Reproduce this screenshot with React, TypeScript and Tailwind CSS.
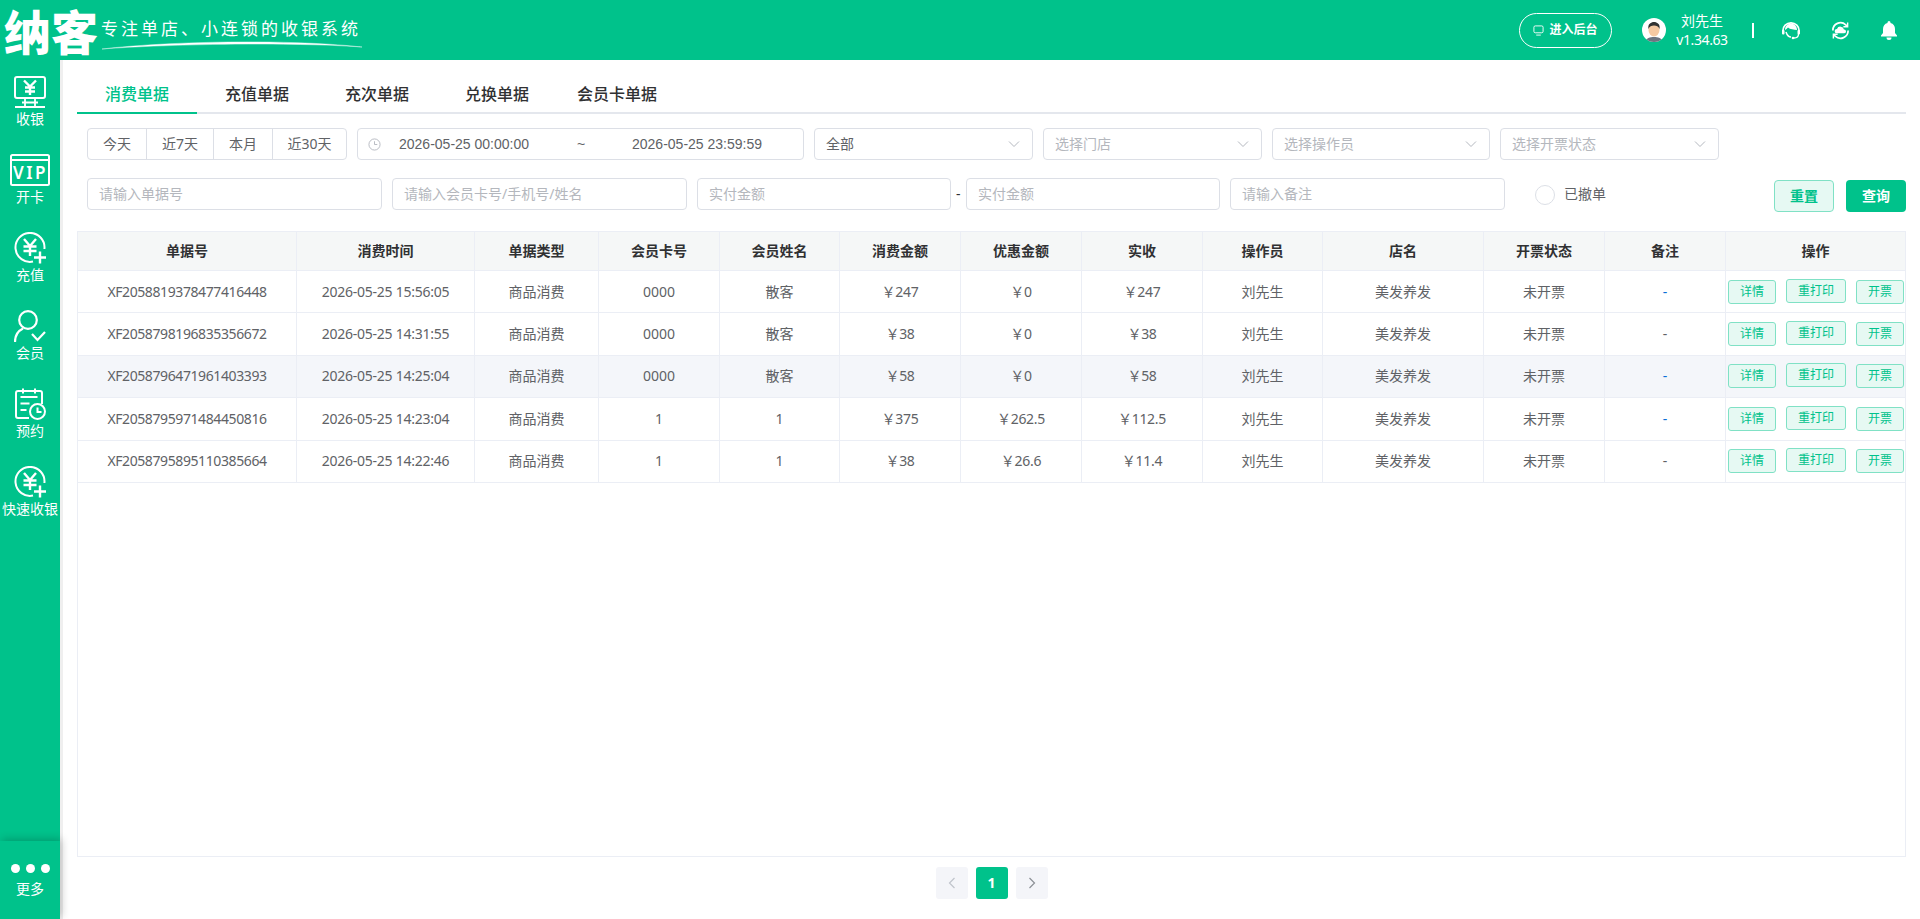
import React from "react";

const FONT = "font-['Noto_Sans','Noto_Sans_CJK_SC',sans-serif]";

function MonitorIcon() {
  return (
    <svg width="32" height="32" viewBox="0 0 32 32" fill="none" stroke="#fff" strokeWidth="2">
      <rect x="1" y="1" width="30" height="21" rx="2" />
      <path d="M10 4.500l6 6 6-6M16 10.500v8.500M11 11.500h10M11 15.500h10" strokeWidth="2.4" />
      <path d="M11 22v8M21 22v8M8 26.500h16M1 31h30" strokeWidth="1.8" />
    </svg>
  );
}

function VipIcon() {
  return (
    <svg width="40" height="32" viewBox="0 0 40 32" fill="none" stroke="#fff" strokeWidth="2">
      <rect x="1" y="1" width="38" height="30" rx="1.5" />
      <path d="M1 6h38" />
      <text x="20.500" y="25" textAnchor="middle" fill="#fff" stroke="none" fontSize="17" fontWeight="600" letterSpacing="2.5" fontFamily="Noto Sans, sans-serif">VIP</text>
    </svg>
  );
}

function YenPlusIcon() {
  return (
    <svg width="32" height="32" viewBox="0 0 32 32" fill="none" stroke="#fff" strokeWidth="2">
      <path d="M19 29.600A14.500 14.500 0 1 1 30.400 17" />
      <path d="M10 7l6 7 6-7M16 14v10M9.500 14.500h13M9.500 19h13" strokeWidth="2.4" />
      <path d="M26 19.500v12M20 25.500h12" strokeWidth="2.4" />
    </svg>
  );
}

function MemberIcon() {
  return (
    <svg width="32" height="32" viewBox="0 0 32 32" fill="none" stroke="#fff" strokeWidth="2.200">
      <circle cx="14" cy="10" r="8.800" />
      <path d="M1 32c0-6 3-11 8-13.500" />
      <path d="M18 24l5.500 6 7.500-8" />
    </svg>
  );
}

function CalendarIcon() {
  return (
    <svg width="32" height="32" viewBox="0 0 32 32" fill="none" stroke="#fff" strokeWidth="2">
      <path d="M15 30H4a2 2 0 0 1-2-2V5a2 2 0 0 1 2-2h22a2 2 0 0 1 2 2v11" />
      <path d="M9 0.500v5M21 0.500v5M6.500 9h17M6.500 15.500h9M6.500 22h6" />
      <circle cx="23.500" cy="23.500" r="7.500" />
      <path d="M23.500 19.500v4.500h4" />
    </svg>
  );
}

const NAV: [React.ReactNode, string][] = [
  [<MonitorIcon />, "收银"],
  [<VipIcon />, "开卡"],
  [<YenPlusIcon />, "充值"],
  [<MemberIcon />, "会员"],
  [<CalendarIcon />, "预约"],
  [<YenPlusIcon />, "快速收银"],
];

function Chevron() {
  return (
    <svg width="12" height="12" viewBox="0 0 12 12" fill="none" stroke="#b4b8bf" strokeWidth="1">
      <path d="M1 3.500l5 5 5-5" />
    </svg>
  );
}

function Select({ w, text, placeholder }: { w: string; text: string; placeholder?: boolean }) {
  return (
    <div className={`${w} h-8 flex items-center justify-between pl-[11px] pr-3 border border-[#dcdfe6] rounded text-sm ${placeholder ? "text-[#b4b7bd]" : "text-[#606266]"}`}>
      <span>{text}</span>
      <Chevron />
    </div>
  );
}

function Input({ w, text }: { w: string; text: string }) {
  return (
    <div className={`${w} h-8 flex items-center px-[11px] border border-[#dcdfe6] rounded text-sm text-[#b4b7bd]`}>{text}</div>
  );
}

const ROWS = [
  ["XF2058819378477416448", "2026-05-25 15:56:05", "0000", "散客", "￥247", "￥0", "￥247", true],
  ["XF2058798196835356672", "2026-05-25 14:31:55", "0000", "散客", "￥38", "￥0", "￥38", false],
  ["XF2058796471961403393", "2026-05-25 14:25:04", "0000", "散客", "￥58", "￥0", "￥58", true],
  ["XF2058795971484450816", "2026-05-25 14:23:04", "1", "1", "￥375", "￥262.5", "￥112.5", true],
  ["XF2058795895110385664", "2026-05-25 14:22:46", "1", "1", "￥38", "￥26.6", "￥11.4", false],
] as const;

const HEAD = ["单据号", "消费时间", "单据类型", "会员卡号", "会员姓名", "消费金额", "优惠金额", "实收", "操作员", "店名", "开票状态", "备注", "操作"];
const GRID = "grid grid-cols-[219px_178px_124px_121px_120px_121px_121px_121px_120px_161px_121px_121px_1fr]";

function Cell({ children }: { children: React.ReactNode }) {
  return <div className="flex items-center justify-center border-r border-[#ebeef5] last:border-r-0 min-w-0">{children}</div>;
}

function OpBtn({ w, children, up }: { w: string; children: React.ReactNode; up?: boolean }) {
  return (
    <div className={`${w} h-6 ${up ? "-mt-[2px]" : ""} flex items-center justify-center rounded-[3px] border border-[#80e1c5] bg-[#e6f9f3] text-xs text-[#00c28b]`}>{children}</div>
  );
}

export default function App() {
  return (
    <div className={`${FONT} w-full h-[919px] overflow-hidden flex flex-col bg-white`}>
      <header className="h-[60px] shrink-0 bg-[#00c28b] flex items-center text-white">
        <div className="pl-[4px] w-[370px] shrink-0 flex items-center">
          <span className="text-[47px] leading-[60px] font-black font-['Noto_Sans_CJK_SC',sans-serif] whitespace-nowrap">纳客</span>
          <div className="relative ml-[3px] h-[60px] pt-[16px]">
            <span className="block text-[17px] leading-[24px] tracking-[3px] font-['Noto_Sans_CJK_SC',sans-serif] whitespace-nowrap">专注单店、小连锁的收银系统</span>
            <svg className="absolute -left-px top-[39px]" width="265" height="12" viewBox="0 0 265 12" fill="none">
              <path d="M2 10C70 2 190 0 262 8C190 3 70 5 2 10Z" fill="#fff" stroke="#fff" strokeWidth="0.400" />
            </svg>
          </div>
        </div>
        <div className="flex-1" />
        <div className="w-[93px] h-[35px] flex items-center justify-center gap-[5px] border border-white rounded-full text-xs font-bold">
          <svg width="11" height="11" viewBox="0 0 12 12" fill="none" stroke="#fff" strokeWidth="1">
            <rect x="1" y="1" width="10" height="7.500" rx="1.500" />
            <path d="M3.500 11h5" />
          </svg>
          <span>进入后台</span>
        </div>
        <div className="ml-[30px] w-6 h-6 rounded-full bg-white overflow-hidden">
          <svg width="24" height="24" viewBox="0 0 24 24">
            <path d="M3 24c1-4 5-5 9-5s8 1 9 5z" fill="#6c7480" />
            <ellipse cx="12" cy="12" rx="5.500" ry="6.500" fill="#f6c9a2" />
            <path d="M6.500 11C5.500 6 9 4 12 4s6.500 2 5.500 7c-1-3-3-3.500-5.500-3.500S7.500 8 6.500 11z" fill="#333" />
          </svg>
        </div>
        <div className="w-[72px] flex flex-col items-center text-sm leading-[19px]">
          <span>刘先生</span>
          <span className="tracking-[-0.4px]">v1.34.63</span>
        </div>
        <div className="ml-[14px] w-[2px] h-[15px] bg-white" />
        <svg className="ml-[27px]" width="20" height="20" viewBox="0 0 20 20" fill="none" stroke="#fff">
          <path d="M1.800 11a8.200 8.200 0 0 1 16.400 0" strokeWidth="1.700" />
          <path d="M4 10c0-4 3-6.500 6-6.500s6 2.500 6 6.500c-3-.5-7-.5-9-2.500-1 1-2 2-3 2.500z" fill="#fff" stroke="none" />
          <rect x="1" y="10" width="2.500" height="4.500" rx="1" fill="#fff" stroke="none" />
          <rect x="16.500" y="10" width="2.500" height="4.500" rx="1" fill="#fff" stroke="none" />
          <path d="M5 12c1 3 3 5 5 5" strokeWidth="1.500" />
          <path d="M17.500 14c0 2.500-2 4-4.500 4" strokeWidth="1.300" />
          <circle cx="12" cy="18" r="1.300" fill="#fff" stroke="none" />
        </svg>
        <svg className="ml-[30px]" width="19" height="19" viewBox="0 0 20 20" fill="none" stroke="#fff" strokeWidth="1.800">
          <path d="M2 10a8 8 0 0 1 13.500-6l1.500 1.500M18 10a8 8 0 0 1-13.500 6L3 14.500" />
          <path d="M17.500 1.500v4.500H13M2.500 18.500V14H7" strokeWidth="1.500" />
          <path d="M6 13a2.300 2.300 0 0 1 .3-4.600 3.800 3.800 0 0 1 7.300.6A2 2 0 0 1 14 13z" fill="#fff" stroke="none" />
        </svg>
        <svg className="ml-[31px] mr-[23px]" width="16" height="19" viewBox="0 0 16 19" fill="#fff">
          <path d="M8 0a1.500 1.500 0 0 1 1.500 1.500v.4C12.500 2.600 14 5 14 8v4l2 2.500v.9H0v-.9L2 12V8c0-3 1.500-5.400 4.500-6.100v-.4A1.500 1.500 0 0 1 8 0z" />
          <path d="M5.500 16.500h5a2.500 2.500 0 0 1-5 0z" />
        </svg>
      </header>

      <div className="flex-1 flex min-h-0">
        <aside className="w-[60px] shrink-0 bg-[#00c28b] flex flex-col text-white relative z-10">
          <nav className="flex-1 pt-4 flex flex-col">
            {NAV.map(([icon, label], i) => (
              <div key={i} className="h-[78px] flex flex-col items-center">
                <div className="h-8 flex items-center justify-center">{icon}</div>
                <div className="mt-[1px] text-sm leading-[20px] whitespace-nowrap">{label}</div>
              </div>
            ))}
          </nav>
          <div className="h-[78px] pt-[23px] flex flex-col items-center bg-[#00c28b] shadow-[2px_-2px_8px_rgba(0,0,0,0.2)]">
            <div className="flex gap-[6px]">
              <span className="w-[9px] h-[9px] rounded-full bg-white" />
              <span className="w-[9px] h-[9px] rounded-full bg-white" />
              <span className="w-[9px] h-[9px] rounded-full bg-white" />
            </div>
            <div className="mt-[6px] text-sm leading-[20px]">更多</div>
          </div>
        </aside>

        <main className="flex-1 min-w-0 border-l-[3px] border-[#efefef] pl-[14px] pr-[14px] flex flex-col">
          <div className="h-[54px] shrink-0 flex items-stretch border-b-2 border-[#e4e7ed]">
            {["消费单据", "充值单据", "充次单据", "兑换单据", "会员卡单据"].map((t, i) => (
              <div key={t} className={`w-[120px] -mb-[2px] pt-[16px] flex items-center justify-center text-base font-medium border-b-2 ${i === 0 ? "text-[#00c28b] border-[#00c28b]" : "text-[#303133] border-transparent"}`}>{t}</div>
            ))}
          </div>

          <div className="mt-[14px] pl-[10px] flex gap-[10px]">
            <div className="w-[260px] h-8 flex border border-[#dcdfe6] rounded text-sm text-[#606266]">
              <div className="w-[59px] flex items-center justify-center border-r border-[#dcdfe6]">今天</div>
              <div className="w-[67px] flex items-center justify-center border-r border-[#dcdfe6]">近7天</div>
              <div className="w-[59px] flex items-center justify-center border-r border-[#dcdfe6]">本月</div>
              <div className="flex-1 flex items-center justify-center">近30天</div>
            </div>
            <div className="w-[447px] h-8 flex items-center pl-[10px] border border-[#dcdfe6] rounded text-sm text-[#606266] font-['Liberation_Sans','Noto_Sans_CJK_SC',sans-serif]">
              <svg width="13" height="13" viewBox="0 0 14 14" fill="none" stroke="#b4b8bf" strokeWidth="1">
                <circle cx="7" cy="7" r="6" />
                <path d="M7 3.500V7h3" />
              </svg>
              <span className="ml-[18px] w-[178px]">2026-05-25 00:00:00</span>
              <span className="w-[55px]">~</span>
              <span>2026-05-25 23:59:59</span>
            </div>
            <Select w="w-[219px]" text="全部" />
            <Select w="w-[219px]" text="选择门店" placeholder />
            <Select w="w-[218px]" text="选择操作员" placeholder />
            <Select w="w-[219px]" text="选择开票状态" placeholder />
          </div>

          <div className="mt-[18px] pl-[10px] flex items-start">
            <Input w="w-[295px]" text="请输入单据号" />
            <div className="w-[10px]" />
            <Input w="w-[295px]" text="请输入会员卡号/手机号/姓名" />
            <div className="w-[10px]" />
            <Input w="w-[254px]" text="实付金额" />
            <div className="w-[15px] h-8 pl-[5px] flex items-center text-sm text-[#303133]">-</div>
            <Input w="w-[254px]" text="实付金额" />
            <div className="w-[10px]" />
            <Input w="w-[275px]" text="请输入备注" />
            <div className="ml-[30px] mt-[7px] w-5 h-5 rounded-full border border-[#dcdfe6]" />
            <span className="ml-[9px] h-8 flex items-center text-sm text-[#606266]">已撤单</span>
            <div className="flex-1" />
            <div className="mt-[2px] w-[60px] h-8 flex items-center justify-center rounded border border-[#80e1c5] bg-[#e6f9f3] text-sm font-bold text-[#00c28b]">重置</div>
            <div className="mt-[2px] ml-3 w-[60px] h-8 flex items-center justify-center rounded bg-[#00c28b] text-sm font-bold text-white">查询</div>
          </div>

          <div className="mt-[19px] h-[626px] shrink-0 border border-[#ebeef5] text-sm">
            <div className={`${GRID} h-[39px] bg-[#f5f7f7] border-b border-[#ebeef5] font-bold text-[#303133]`}>
              {HEAD.map((h) => (
                <Cell key={h}>{h}</Cell>
              ))}
            </div>
            {ROWS.map((r, i) => (
              <div key={r[0]} className={`${GRID} h-[42.4px] border-b border-[#ebeef5] text-[#606266] ${i === 2 ? "bg-[#f4f6fa]" : ""}`}>
                <Cell><span className="tracking-[-0.4px]">{r[0]}</span></Cell>
                <Cell><span className="tracking-[-0.26px]">{r[1]}</span></Cell>
                <Cell>商品消费</Cell>
                <Cell>{r[2]}</Cell>
                <Cell>{r[3]}</Cell>
                <Cell><span className="tracking-[-0.3px]">{r[4]}</span></Cell>
                <Cell><span className="tracking-[-0.3px]">{r[5]}</span></Cell>
                <Cell><span className="tracking-[-0.3px]">{r[6]}</span></Cell>
                <Cell>刘先生</Cell>
                <Cell>美发养发</Cell>
                <Cell>未开票</Cell>
                <Cell><span className={r[7] ? "text-[#0a6fd6]" : ""}>-</span></Cell>
                <div className="flex items-center pl-[2px] gap-[10px]">
                  <OpBtn w="w-12">详情</OpBtn>
                  <OpBtn w="w-[60px]" up>重打印</OpBtn>
                  <OpBtn w="w-12">开票</OpBtn>
                </div>
              </div>
            ))}
          </div>

          <div className="mt-[10px] flex justify-center gap-2">
            <div className="w-8 h-8 rounded-[3px] bg-[#f4f5f9] flex items-center justify-center">
              <svg width="8" height="12" viewBox="0 0 8 12" fill="none" stroke="#c0c4cc" strokeWidth="1.200"><path d="M6.500 1L1.500 6l5 5" /></svg>
            </div>
            <div className="w-8 h-8 rounded-[3px] bg-[#00c28b] flex items-center justify-center text-sm font-bold text-white">1</div>
            <div className="w-8 h-8 rounded-[3px] bg-[#f4f5f9] flex items-center justify-center">
              <svg width="8" height="12" viewBox="0 0 8 12" fill="none" stroke="#8c9096" strokeWidth="1.200"><path d="M1.500 1l5 5-5 5" /></svg>
            </div>
          </div>
        </main>
      </div>
    </div>
  );
}
